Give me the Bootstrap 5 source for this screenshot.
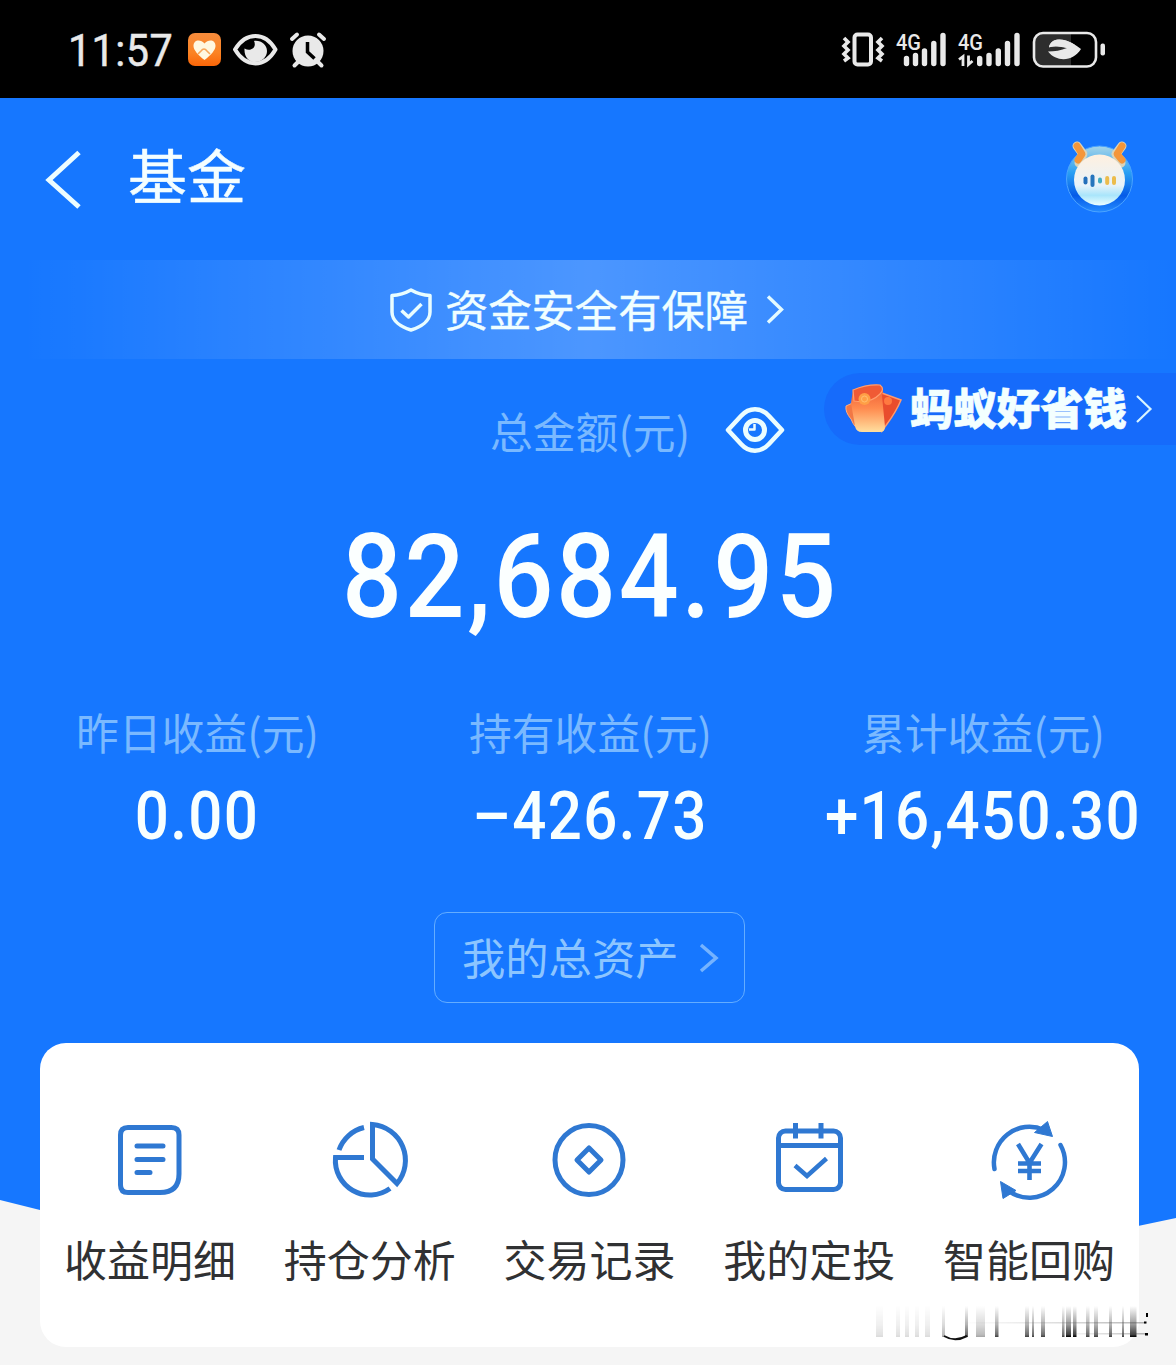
<!DOCTYPE html>
<html lang="zh-CN">
<head>
<meta charset="utf-8">
<meta name="viewport" content="width=device-width, initial-scale=1">
<title>基金</title>
<link href="https://cdn.jsdelivr.net/npm/bootstrap@5.3.0/dist/css/bootstrap.min.css" rel="stylesheet">
<style>
  body { background: #f5f5f5; font-family: Roboto, "Noto Sans CJK SC", sans-serif; overflow: hidden; }
  svg { display: block; flex: none; overflow: visible; }
  .screen { width: 1176px; height: 1365px; overflow: hidden; }
  .status-bar { height: 98px; background: #000; padding: 0 71px 0 66px; }
  .clock { font-size: 44px; line-height: 98px; color: #e9e9e9; width: 120px; padding-top: 3px; letter-spacing: .5px;
    -webkit-text-stroke: .5px #e9e9e9; transform: scaleX(.94); transform-origin: 0 50%; padding-left: 2px; }
  .hero { height: 1267px; isolation: isolate; }
  .hero::before { content: ""; position: absolute; inset: 0; z-index: -1; background: #1677ff;
    clip-path: polygon(0 0, 100% 0, 100% 1120px, 1138px 1128px, 600px 1160px, 40px 1112px, 0 1102px); }
  .cjk { font-family: "Noto Sans CJK SC", sans-serif; }
  .top-nav { height: 162px; padding: 0 42px 0 45px; }
  .page-title { font-size: 59px; line-height: 80px; color: #f4feff; margin-left: 47px; margin-top: -10px; -webkit-text-stroke: .5px #f4feff; }
  .notice { height: 99px; background: linear-gradient(90deg, rgba(255,255,255,0) 2%, rgba(255,255,255,.23) 50%, rgba(255,255,255,0) 100%);
    color: #f0feff; font-size: 43.3px; padding-right: 2px; }
  .notice-text { line-height: 60px; margin: -4px 18px 0 13px; -webkit-text-stroke: .4px #f0feff; }
  .soft { color: #7ab9ff; font-size: 42.8px; line-height: 60px; }
  .total-label { height: 145px; padding: 0 391px 3px 490px; }
  .promo { top: 275px; right: 0; width: 352px; height: 72px; background: #166bfb; border-radius: 36px 0 0 36px; padding-left: 20px; }
  .promo-text { font-size: 43.4px; font-weight: 900; line-height: 60px; color: #f3ffff; margin: -7px 9px 0 6px; -webkit-text-stroke: .6px #f3ffff; }
  .total { height: 146px; font-size: 116px; line-height: 146px; font-weight: 500; color: #fbffff; letter-spacing: 2.9px; transform: scaleX(.91); padding-left: 5px; }
  .stats { width: 1179px; margin-top: 51px; }
  .stats .soft { padding-left: 2px; }
  .stat-value { font-size: 66px; line-height: 80px; font-weight: 500; color: #f8ffff; margin-top: 16px; letter-spacing: 1.5px; white-space: nowrap; transform: scaleX(.91); padding-left: 1px; }
  .asset-btn { width: 311px; height: 91px; margin: 55px auto 0 434px; border: 1px solid #64adff; border-radius: 13px; padding-left: 27px; }
  .asset-btn .cap { color: #8cc5ff; font-size: 43.3px; line-height: 60px; margin: -3px 21px 0 0; }
  .tool-card { width: 1099px; height: 304px; margin: 40px 0 0 40px; border-radius: 26px; background: #fff; padding-top: 72px; }
  .tool { color: #303133; font-size: 43px; line-height: 60px; }
  .tool svg { margin: 0 auto 23px; stroke: #2f78d2; fill: none; stroke-width: 5; }
  .smear { left: 870px; top: 1200px; }
</style>
</head>
<body>
<div class="screen">
  <div class="status-bar d-flex align-items-center">
    <div class="clock">11:57</div>
    <svg width="142" height="98" viewBox="186 0 142 98">
      <defs><linearGradient id="og" x1="0" y1="0" x2="0" y2="1"><stop offset="0" stop-color="#f58b3c"/><stop offset=".6" stop-color="#fb8323"/><stop offset="1" stop-color="#fa6508"/></linearGradient></defs>
      <rect x="188" y="33" width="33" height="33" rx="7" fill="url(#og)"/>
      <path d="M204.500 60C198 55 193.500 50 193.500 46C193.500 39 201 39 204.500 43.500C208 39 215.500 39 215.500 46C215.500 50 211 55 204.500 60Z" fill="#fff7e0"/>
      <path d="M198 54l3-3q3-4 6 0l3 3" fill="none" stroke="#f7a659" stroke-width="1.600"/>
      <path d="M235 49.500C246 31.500 265 31.500 275.500 49.500C265 68 246 68 235 49.500Z" fill="none" stroke="#e9e9e9" stroke-width="4" stroke-linejoin="round"/>
      <path d="M254 41C257 47 251 52 244.500 48.500C244 57 249 62 255 62C262 62 267 57 267 51C267 45 261 40 254 41Z" fill="#e9e9e9"/>
      <circle cx="308" cy="51" r="15.500" fill="#e9e9e9"/>
      <path d="M307.500 42v10l7 6.500" fill="none" stroke="#000" stroke-width="3.500"/>
      <path d="M292 39l5-4.500M324 39l-5-4.500M299 61l-4.500 4.500M317 61l4.500 4.500" stroke="#e9e9e9" stroke-width="4" stroke-linecap="round"/>
    </svg>
    <svg class="ms-auto" width="265" height="98" viewBox="840 0 265 98" fill="#e9e9e9">
      <rect x="854.500" y="34.500" width="16.500" height="30" rx="3" fill="none" stroke="#e9e9e9" stroke-width="4"/>
      <path d="M844 38l4 4l-4 4l4 4l-4 4l4 4l-4 3M882 38l-4 4l4 4l-4 4l4 4l-4 4l4 3" fill="none" stroke="#e9e9e9" stroke-width="3.600"/>
      <g font-family="Roboto, sans-serif" font-size="22.500" font-weight="500"><text x="896" y="49.500" textLength="25" lengthAdjust="spacingAndGlyphs">4G</text><text x="958" y="49.500" textLength="25" lengthAdjust="spacingAndGlyphs">4G</text></g>
      <g stroke="#e9e9e9" stroke-width="5.400" stroke-linecap="round"><path d="M906.500 58.500v5M915.500 55.500v8M924.500 51v12.500M933.800 43.500v20M943 35.500v28"/><path d="M979.700 58.500v5M989 55.500v8M998.300 51v12.500M1007.500 43.500v20M1017 35.500v28"/></g>
      <path d="M959 59.500l4-3v9.500M968.500 55.500v9l4-3.500" fill="none" stroke="#e9e9e9" stroke-width="2.800"/>
      <path d="M1043 34h28v32h-28q-8 0-8-8v-16q0-8 8-8Z" fill="#2d2d2d"/>
      <rect x="1034" y="33" width="62" height="33.500" rx="9" fill="none" stroke="#e9e9e9" stroke-width="2.600"/>
      <path d="M1049 47.500C1051 37 1065 36.500 1081 49C1074 61 1057 63 1048 51.500Q1058 51.500 1067 48Q1058 44.500 1049 47.500Z"/>
      <path d="M1049 47C1051 38 1062 37 1075 45L1067 48Q1058 45.500 1049 47Z"/>
      <rect x="1100.500" y="43.500" width="4.500" height="12" rx="2"/>
    </svg>
  </div>

  <main class="hero position-relative">
    <header class="top-nav d-flex align-items-center">
      <svg width="36" height="162" viewBox="45 98 36 162"><path d="M79 152.500L49 180L79 207" fill="none" stroke="#edfdff" stroke-width="5"/></svg>
      <div class="page-title cjk">基金</div>
      <svg class="ms-auto" width="68" height="162" viewBox="1066 98 68 162">
        <defs>
          <linearGradient id="ring" x1="0" y1="0" x2="0" y2="1"><stop offset="0" stop-color="#a7d5e8"/><stop offset=".4" stop-color="#2aa0f4"/><stop offset=".75" stop-color="#055be8"/><stop offset="1" stop-color="#258cff"/></linearGradient>
          <linearGradient id="face" x1="0" y1="0" x2="0" y2="1"><stop offset="0" stop-color="#fff0df"/><stop offset=".6" stop-color="#e8f3fa"/><stop offset=".8" stop-color="#a9e5fb"/><stop offset="1" stop-color="#edffff"/></linearGradient>
        </defs>
        <circle cx="1099.500" cy="179" r="33" fill="url(#ring)" stroke="#4ba4ff"/>
        <path d="M1077 146L1083 154L1079 163M1122 146L1116 154L1121 163" fill="none" stroke="#d9d3b9" stroke-width="9" stroke-linecap="round" stroke-linejoin="round"/>
        <path d="M1077 146L1082 154L1078 160M1122 146L1117 154L1122 160" fill="none" stroke="#f4963a" stroke-width="7" stroke-linecap="round" stroke-linejoin="round"/>
        <circle cx="1099.500" cy="180" r="25.500" fill="url(#face)"/>
        <g stroke-width="4" stroke-linecap="round"><path d="M1085.500 178.500v4" stroke="#236fba"/><path d="M1092.500 176.500v8.500" stroke="#2675bd"/><path d="M1100 179.500v2" stroke="#44adc3"/><path d="M1107.200 178v5M1114 178v5" stroke="#ecbc4c"/></g>
      </svg>
    </header>

    <div class="notice cjk d-flex align-items-center justify-content-center">
      <svg width="42" height="44" viewBox="0 0 42 44" fill="none" stroke="#e9fdff" stroke-width="3.500" stroke-linejoin="round"><path d="M21 2Q12 7 2 7.500V24C2 33 11 39 21 42C31 39 40 33 40 24V7.500Q30 7 21 2Z"/><path d="M11.500 22.500L18.500 29L31.500 16"/></svg>
      <span class="notice-text">资金安全有保障</span>
      <svg width="18" height="28" viewBox="0 0 18 28"><path d="M2 .5L15.500 13.500L2 26.500" fill="none" stroke="#e4fbff" stroke-width="3.400"/></svg>
    </div>

    <div class="total-label d-flex align-items-center">
      <span class="soft cjk">总金额(元)</span>
      <svg class="ms-auto" width="60" height="46" viewBox="0 0 60 46" fill="none" stroke="#ebfdff" stroke-width="4.500" stroke-linejoin="round"><path d="M3 23L16 9C24 0 36 0 44 9L57 23L44 37C36 46 24 46 16 37Z"/><circle cx="30" cy="23" r="9.500" stroke-width="5"/><path d="M29.500 17v5.500h-5.500" stroke-width="2.500"/></svg>
    </div>
    <a class="promo position-absolute d-flex align-items-center text-decoration-none" href="#">
      <svg width="60" height="52" viewBox="844 384 60 52">
        <defs><linearGradient id="pk" x1="0" y1="0" x2="0" y2="1"><stop offset="0" stop-color="#ec5631"/><stop offset=".5" stop-color="#ff8b4f"/><stop offset="1" stop-color="#ffdf9f"/></linearGradient></defs>
        <path d="M879 393L901 401Q896 413 887 425L882 432Z" fill="#e94d2d" stroke="#ff996d" stroke-width="1.500"/>
        <path d="M846 407L857 402L860 430Q855 430 851 420Q845 413 846 407Z" fill="#f27845" stroke="#ffac80"/>
        <path d="M853 391Q867 385 880 386Q885 389 882 397L885 428Q885 433 880 433L862 433Q856 433 855 427L851 404Z" fill="url(#pk)"/>
        <path d="M853 391Q867 385 880 386Q885 390 880 395Q870 405 854 402Z" fill="#f05a35" stroke="#ff9e70" stroke-width="1.200"/>
        <circle cx="864.500" cy="400" r="6" fill="#ff9f46"/><circle cx="864.500" cy="400" r="3" fill="none" stroke="#ffc071"/>
        <circle cx="888" cy="402" r="4" fill="#ff7940"/>
      </svg>
      <span class="promo-text cjk">蚂蚁好省钱</span>
      <svg width="16" height="28" viewBox="0 0 16 28"><path d="M1 1L14.500 14L1 27" fill="none" stroke="#d8f5ff" stroke-width="2.200"/></svg>
    </a>

    <div class="total text-center">82,684.95</div>

    <div class="stats row g-0 text-center">
      <div class="col-4"><div class="soft cjk">昨日收益(元)</div><div class="stat-value">0.00</div></div>
      <div class="col-4"><div class="soft cjk">持有收益(元)</div><div class="stat-value">–426.73</div></div>
      <div class="col-4"><div class="soft cjk">累计收益(元)</div><div class="stat-value">+16,450.30</div></div>
    </div>

    <div class="asset-btn d-flex align-items-center">
      <span class="cap cjk">我的总资产</span>
      <svg width="20" height="30" viewBox="0 0 20 30"><path d="M2 2L17 15L2 28" fill="none" stroke="#75b3ff" stroke-width="3.500"/></svg>
    </div>

    <section class="tool-card d-flex text-center cjk">
      <div class="tool flex-fill">
        <svg width="80" height="90" viewBox="110 1115 80 90"><path d="M128 1127.500H171.500Q179 1127.500 179 1135V1174Q179 1192.500 160 1192.500H128Q120.500 1192.500 120.500 1185V1135Q120.500 1127.500 128 1127.500Z"/><path d="M137 1146h26M137 1159.500h26M137 1172.500h13" stroke-linecap="round"/></svg>
        收益明细
      </div>
      <div class="tool flex-fill">
        <svg width="80" height="90" viewBox="330 1115 80 90"><path d="M339 1150A35 35 0 0 1 364 1127.500M364 1157.500H335.500A34.500 34.500 0 0 0 390 1188.500M372.500 1124.500V1159L397 1183.500A36 36 0 0 0 372.500 1124.500Z"/></svg>
        持仓分析
      </div>
      <div class="tool flex-fill">
        <svg width="80" height="90" viewBox="549 1115 80 90"><ellipse cx="589" cy="1160" rx="34" ry="34.500"/><path d="M589 1148L601 1160L589 1172L577 1160Z" stroke-linejoin="round"/></svg>
        交易记录
      </div>
      <div class="tool flex-fill">
        <svg width="80" height="90" viewBox="769 1115 80 90"><rect x="778.500" y="1131" width="62" height="58.500" rx="7"/><path d="M779 1145.500h61M795.500 1123v15.500M821 1123v15.500"/><path d="M795 1165.500L807 1176L826.500 1158.500" stroke-width="4.500"/></svg>
        我的定投
      </div>
      <div class="tool flex-fill">
        <svg width="80" height="90" viewBox="989 1115 80 90"><path d="M994.500 1169A35.500 35.500 0 0 1 1044 1130M1060.500 1145A35.500 35.500 0 0 1 1008 1190.500" stroke-width="4.500" stroke-linecap="round"/><path d="M1047.500 1121.500L1052.500 1136.500L1034.500 1132.500ZM1000.500 1181.500L1016 1190.500L1003 1198.500Z" fill="#2f78d2" stroke-width="1"/><path d="M1018 1144L1029.500 1163L1041.500 1144M1029.500 1161V1180M1018 1163.500h23M1018 1171h23" stroke-width="4.600"/></svg>
        智能回购
      </div>
    </section>

    <svg class="smear position-absolute" width="285" height="45" viewBox="870 1298 285 45">
      <defs><linearGradient id="fade" x1="0" y1="0" x2="0" y2="1"><stop offset="0" stop-color="#000" stop-opacity="0"/><stop offset=".6" stop-color="#000" stop-opacity=".4"/><stop offset=".92" stop-color="#000" stop-opacity=".75"/><stop offset="1" stop-color="#000"/></linearGradient>
      <linearGradient id="line" x1="0" y1="0" x2="1" y2="0"><stop offset="0" stop-color="#777" stop-opacity="0"/><stop offset="1" stop-color="#444" stop-opacity=".8"/></linearGradient></defs>
      <g fill="url(#fade)">
        <g opacity=".14"><rect x="876" y="1306" width="7" height="31"/><rect x="896" y="1306" width="4" height="31"/><rect x="905" y="1306" width="4" height="31"/><rect x="915" y="1306" width="4" height="31"/><rect x="925" y="1306" width="5" height="31"/></g>
        <g opacity=".35"><rect x="942" y="1306" width="3" height="31"/><rect x="976" y="1306" width="9" height="31"/></g>
        <g opacity=".75"><rect x="965" y="1306" width="3" height="31"/><rect x="995" y="1306" width="3.500" height="31"/><rect x="1025" y="1306" width="4" height="31"/><rect x="1032" y="1306" width="2" height="31"/><rect x="1041" y="1306" width="4" height="31"/><rect x="1062" y="1306" width="2.500" height="31"/><rect x="1086" y="1306" width="3.500" height="31"/><rect x="1094" y="1306" width="4" height="31"/><rect x="1109" y="1306" width="3" height="31"/><rect x="1122" y="1306" width="2" height="31"/></g>
        <rect x="1066" y="1306" width="5" height="31"/><rect x="1073" y="1306" width="3.500" height="31"/><rect x="1130" y="1306" width="6.500" height="31"/>
      </g>
      <path d="M944 1336Q955 1342.500 967 1336" fill="none" stroke="#111" stroke-width="2"/>
      <rect x="960" y="1322" width="186" height="1.500" fill="url(#line)" opacity=".5"/><rect x="1060" y="1333" width="86" height="1.500" fill="url(#line)" opacity=".5"/>
      <path d="M1146 1313h2v4h-2zM1144 1321.500h2.500v2h-2.500zM1145 1333h3v2.500h-3z"/>
    </svg>
  </main>
</div>
<script src="https://cdn.jsdelivr.net/npm/bootstrap@5.3.0/dist/js/bootstrap.bundle.min.js"></script>
</body>
</html>
